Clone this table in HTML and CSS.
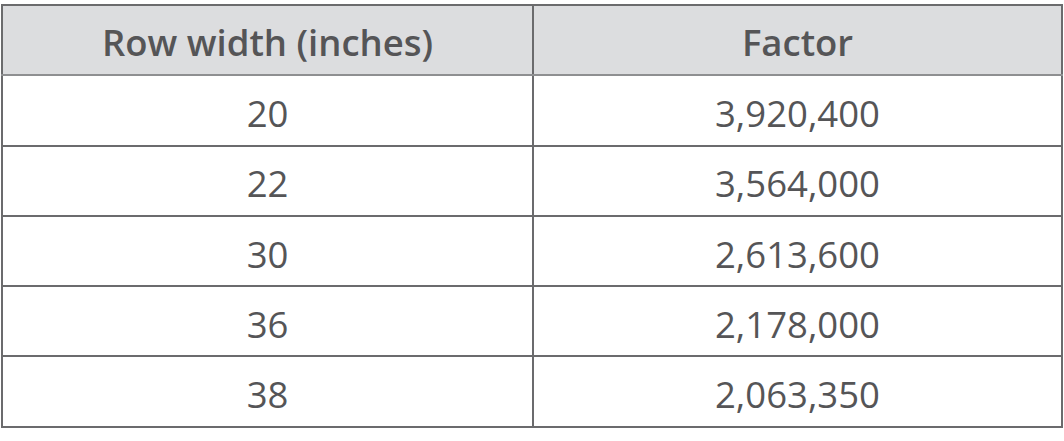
FILE: index.html
```html
<!DOCTYPE html>
<html>
<head>
<meta charset="utf-8">
<link rel="stylesheet" href="styles.css">
</head>
<body>
<table class="factors">
  <thead>
    <tr><th>Row width (inches)</th><th>Factor</th></tr>
  </thead>
  <tbody>
    <tr><td>20</td><td>3,920,400</td></tr>
    <tr><td>22</td><td>3,564,000</td></tr>
    <tr><td>30</td><td>2,613,600</td></tr>
    <tr><td>36</td><td>2,178,000</td></tr>
    <tr><td>38</td><td>2,063,350</td></tr>
  </tbody>
</table>
</body>
</html>
```
FILE: styles.css
```css
html, body {
  margin: 0;
  padding: 0;
  background: #ffffff;
}
body {
  padding: 4px 0 0 1px;
}
.factors {
  border-collapse: collapse;
  width: 1062px;
  font-family: "Open Sans", sans-serif;
  color: #555557;
  table-layout: fixed;
}
.factors th,
.factors td {
  border: 2px solid #6b6b6d;
  text-align: center;
  padding: 6px 0 0;
  height: 62.3px;
  line-height: 1;
}
.factors th {
  background: #dcdddf;
  font-weight: 600;
  font-size: 36.5px;
  border-bottom-color: #8e8f91;
  padding-top: 5px;
  height: 63.3px;
}
.factors td {
  font-size: 36.5px;
  font-weight: 400;
}
.factors th:first-child,
.factors td:first-child {
  width: 529px;
}
```
